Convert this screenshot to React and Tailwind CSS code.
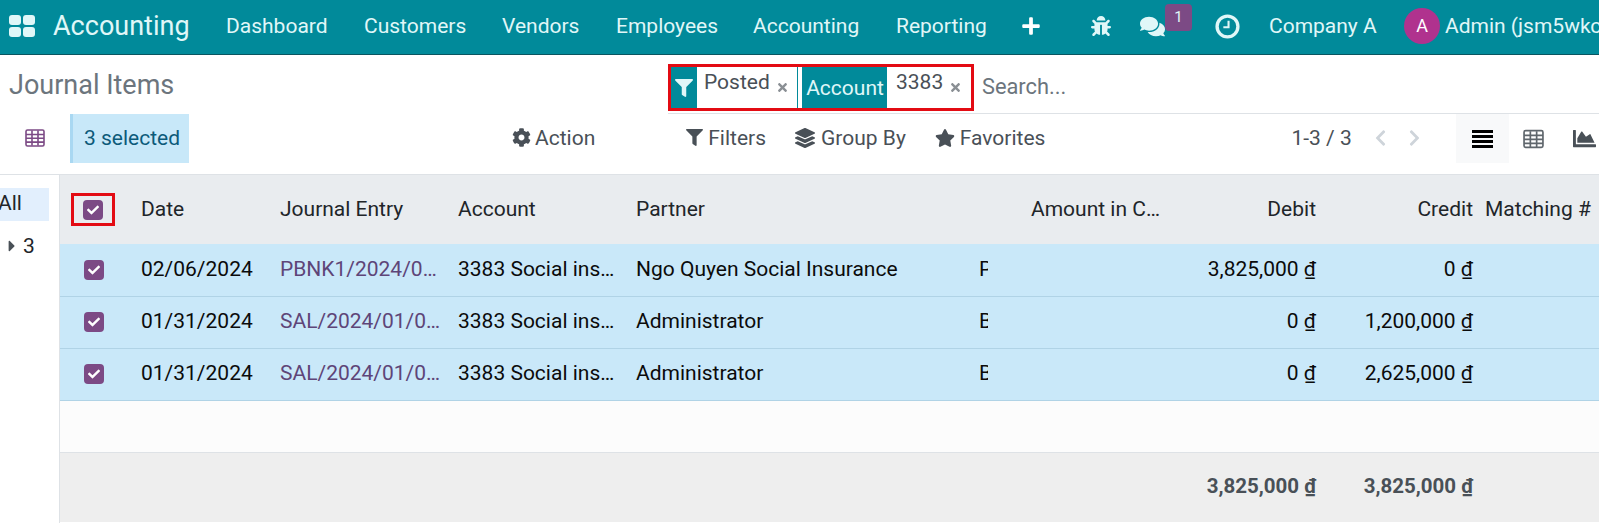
import React from "react";
import { FaBug, FaComments, FaCog, FaFilter, FaLayerGroup, FaStar, FaChartArea, FaChevronLeft, FaChevronRight, FaCheck, FaCaretRight, FaTimes, FaPlus } from "react-icons/fa";

const Check = () => (
  <span className="flex h-5 w-5 items-center justify-center rounded-[4px] bg-[#7c4a85] text-white">
    <FaCheck className="h-[12px] w-[12px]" />
  </span>
);

const TableIcon = ({ className }) => (
  <svg viewBox="0 0 20 18" className={className} fill="none" stroke="currentColor" strokeWidth="1.6">
    <rect x="1" y="1" width="18" height="16" rx="1.5" />
    <path d="M1 5.5h18M1 9.3h18M1 13.1h18M7 1.5v15M13 1.5v15" />
  </svg>
);

const BarsIcon = ({ className }) => (
  <svg viewBox="0 0 21 18" className={className} fill="currentColor">
    <rect x="0" y="0" width="21" height="3" />
    <rect x="0" y="5" width="21" height="3" />
    <rect x="0" y="10" width="21" height="3" />
    <rect x="0" y="15" width="21" height="3" />
  </svg>
);

const ClockIcon = ({ className }) => (
  <svg viewBox="0 0 24 24" className={className} fill="none" stroke="currentColor">
    <circle cx="12" cy="12" r="10" strokeWidth="3.2" />
    <path d="M13 6.5v6.2H8" strokeWidth="2" />
  </svg>
);

const navItems = [
  ["Dashboard", "w-[101px] ml-[37px]"],
  ["Customers", "w-[102px] ml-[37px]"],
  ["Vendors", "w-[78px] ml-[36px]"],
  ["Employees", "w-[100px] ml-[36px]"],
  ["Accounting", "w-[105px] ml-[37px]"],
  ["Reporting", "w-[90px] ml-[38px]"],
];

const rows = [
  ["02/06/2024", "PBNK1/2024/02/0001", "Ngo Quyen Social Insurance", "Payment", "3,825,000", "0"],
  ["01/31/2024", "SAL/2024/01/0001", "Administrator", "BHXH", "0", "1,200,000"],
  ["01/31/2024", "SAL/2024/01/0002", "Administrator", "BHXH", "0", "2,625,000"],
];

const Money = ({ v }) => (
  <span>
    {v} <span className="underline">₫</span>
  </span>
);

const Facet = ({ text, className }) => (
  <div className={`flex h-full items-start bg-white pt-[1px] ${className}`}>
    <span className="text-[#495057]">{text}</span>
    <FaTimes className="ml-[6px] mt-[13px] h-[13px] w-[13px] text-[#8a8f94]" />
  </div>
);

export default function App() {
  return (
    <div className="h-[523px] w-[1599px] overflow-hidden bg-white text-[21px] leading-[28px] text-[#212529] [font-family:Roboto,sans-serif]">
      <header className="flex h-[55px] items-center overflow-hidden whitespace-nowrap border-b border-[#0a5560] bg-[#018a9a] pb-[2px] text-[#e0f7f8] [&>*]:shrink-0">
        <div className="ml-[9px] grid h-[22px] w-[26px] grid-cols-2 gap-[2px]">
          <span className="rounded-[3px] bg-[#e0f7f8]" />
          <span className="rounded-[3px] bg-[#e0f7f8]" />
          <span className="rounded-[3px] bg-[#e0f7f8]" />
          <span className="rounded-[3px] bg-[#e0f7f8]" />
        </div>
        <span className="ml-[18px] w-[136px] text-[27px]">Accounting</span>
        {navItems.map(([t, c]) => (
          <span key={t} className={c}>{t}</span>
        ))}
        <FaPlus className="ml-[35px] h-[20px] w-[20px] text-white" />
        <FaBug className="ml-[50px] h-[20px] w-[20px]" />
        <FaComments className="ml-[29px] h-[23px] w-[25px]" />
        <span className="relative -top-[9px] flex h-[27px] w-[27px] items-center justify-center rounded-[4px] bg-[#7c4a85] text-[15px]">1</span>
        <ClockIcon className="ml-[23px] h-[25px] w-[25px]" />
        <span className="ml-[29px] w-[106px]">Company A</span>
        <span className="ml-[29px] flex h-[36px] w-[36px] items-center justify-center rounded-full bg-[#b0328e] text-[18px] text-white">A</span>
        <span className="ml-[5px]">Admin (jsm5wkc)</span>
      </header>

      <div className="flex h-[59px]">
        <div className="w-[668px] pl-[9px] pt-[14px] text-[27px] leading-[32px] text-[#6c757d]">Journal Items</div>
        <div className="flex-1 pl-[3px]">
          <div className="-ml-[3px] flex h-[59px] border-b border-[#dee2e6]">
            <div className="mt-[9px] flex h-[47px] w-[306px] border-[3px] border-[#e30b13]">
              <div className="flex w-[26px] items-center justify-center bg-[#018a9a]">
                <FaFilter className="h-[18px] w-[18px] text-[#e0f7f8]" />
              </div>
              <Facet text="Posted" className="w-[100px] pl-[7px]" />
              <div className="w-[1px] bg-[#018a9a]" />
              <div className="w-[4px] bg-white" />
              <div className="flex w-[85px] items-center justify-center bg-[#018a9a] pl-[1px] text-[#e0f7f8]">Account</div>
              <Facet text="3383" className="flex-1 pl-[9px]" />
            </div>
            <span className="ml-[8px] mt-[18px] text-[21.8px] text-[#6c757d]">Search...</span>
          </div>
        </div>
      </div>

      <div className="flex h-[61px] items-start overflow-hidden whitespace-nowrap border-b border-[#dee2e6] text-[#495057] [&>*]:shrink-0">
        <TableIcon className="ml-[25px] mt-[15px] h-[18px] w-[20px] text-[#7c4a85]" />
        <div className="ml-[25px] flex h-[49px] w-[119px] items-center border-l-[3px] border-[#a9d8f2] bg-[#c8e8f9] pb-[2px] pl-[11px] text-[#0c5a7a]">3 selected</div>
        <div className="ml-[323px] flex h-[49px] items-center pb-[2px]">
          <FaCog className="h-[19px] w-[19px]" />
          <span className="ml-[4px]">Action</span>
        </div>
        <div className="ml-[91px] flex h-[49px] items-center pb-[2px]">
          <FaFilter className="h-[17px] w-[17px]" />
          <span className="ml-[5px]">Filters</span>
        </div>
        <div className="ml-[29px] flex h-[49px] items-center pb-[2px]">
          <FaLayerGroup className="h-[20px] w-[20px]" />
          <span className="ml-[6px]">Group By</span>
        </div>
        <div className="ml-[29px] flex h-[49px] items-center pb-[2px]">
          <FaStar className="h-[20px] w-[20px]" />
          <span className="ml-[5px]">Favorites</span>
        </div>
        <div className="ml-[246px] flex h-[49px] w-[165px] items-center pb-[2px]">
          <span>1-3 / 3</span>
          <FaChevronLeft className="ml-[21px] h-[18px] w-[15px] text-[#ced4da]" />
          <FaChevronRight className="ml-[19px] h-[18px] w-[15px] text-[#ced4da]" />
        </div>
        <div className="flex h-[49px] w-[53px] items-center justify-center bg-[#f8f9fa] text-black">
          <BarsIcon className="h-[18px] w-[21px]" />
        </div>
        <TableIcon className="ml-[14px] mt-[15px] h-[20px] w-[21px] text-[#5f666c]" />
        <FaChartArea className="ml-[28px] mt-[13px] h-[23px] w-[25px]" />
      </div>

      <div className="flex h-[348px]">
        <aside className="w-[60px] shrink-0 border-r border-[#dee2e6]">
          <div className="mr-[10px] mt-[13px] h-[33px] bg-[#e2effd] leading-[30px]">
            <span className="-ml-[2px] block">All</span>
          </div>
          <div className="ml-[7px] mt-[11px] flex items-center gap-[6px]">
            <FaCaretRight className="h-[18px] w-[10px] text-[#495057]" />
            <span>3</span>
          </div>
        </aside>
        <table className="w-[1539px] shrink-0 table-fixed border-collapse self-start">
          <colgroup>
            <col className="w-[71px]" />
            <col className="w-[139px]" />
            <col className="w-[177px]" />
            <col className="w-[178px]" />
            <col className="w-[343px]" />
            <col className="w-[31px]" />
            <col className="w-[171px]" />
            <col className="w-[157px]" />
            <col className="w-[157px]" />
            <col className="w-[115px]" />
          </colgroup>
          <thead>
            <tr className="h-[69px] bg-[#e9ecef] text-left font-normal">
              <th className="pl-[25px] font-normal">
                <span className="-ml-[14px] flex h-[33px] w-[44px] items-center justify-center border-[3px] border-[#e30b13]">
                  <Check />
                </span>
              </th>
              <th className="pb-[2px] pl-[10px] pr-[11px] font-normal">Date</th>
              <th className="px-[10px] pb-[2px] font-normal">Journal Entry</th>
              <th className="px-[11px] pb-[2px] font-normal">Account</th>
              <th className="px-[11px] pb-[2px] font-normal">Partner</th>
              <th />
              <th className="truncate pb-[2px] pl-[32px] pr-[10px] font-normal">Amount in Currency</th>
              <th className="px-[11px] pb-[2px] text-right font-normal">Debit</th>
              <th className="px-[11px] pb-[2px] text-right font-normal">Credit</th>
              <th className="truncate pb-[2px] pl-[1px] font-normal">Matching #</th>
            </tr>
          </thead>
          <tbody>
            {rows.map((r, i) => (
              <tr key={i} className="h-[52px] border-b border-[#b0d3e6] bg-[#c9e8f9] text-[#0b0b0b]">
                <td className="pl-[24px]"><Check /></td>
                <td className="pb-[2px] pl-[10px] pr-[4px]">{r[0]}</td>
                <td className="truncate pb-[2px] pl-[10px] pr-[3px] text-[#5e4578]">{r[1]}</td>
                <td className="truncate pb-[2px] pl-[11px] pr-[3px]">3383 Social insurance</td>
                <td className="truncate px-[11px] pb-[2px]">{r[2]}</td>
                <td className="pb-[2px] pl-[11px]"><div className="w-[9px] overflow-hidden">{r[3]}</div></td>
                <td />
                <td className="px-[11px] pb-[2px] text-right"><Money v={r[4]} /></td>
                <td className="px-[11px] pb-[2px] text-right"><Money v={r[5]} /></td>
                <td />
              </tr>
            ))}
            <tr className="h-[52px] border-b border-[#dee2e6] bg-[#fcfcfc]"><td colSpan={10} /></tr>
            <tr className="h-[70px] bg-[#eeeeee] text-[20.5px] font-bold text-[#495057]">
              <td colSpan={7} />
              <td className="px-[11px] pb-[2px] text-right"><Money v="3,825,000" /></td>
              <td className="px-[11px] pb-[2px] text-right"><Money v="3,825,000" /></td>
              <td />
            </tr>
          </tbody>
        </table>
      </div>
    </div>
  );
}
